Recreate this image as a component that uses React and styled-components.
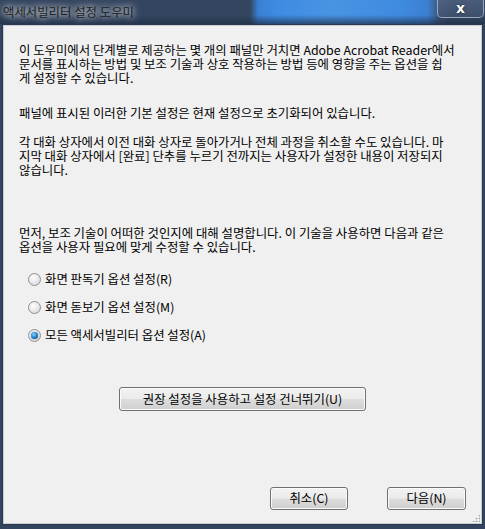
import styled, { createGlobalStyle } from "styled-components";

const GlobalStyle = createGlobalStyle`
  html, body {
    margin: 0;
    padding: 0;
    background: #33445e;
  }
  body {
    font-family: "Noto Sans CJK KR", "Noto Sans", sans-serif;
    font-size: 12.4px;
    color: #000;
  }
`;

const Window = styled.div`
  width: 485px;
  height: 529px;
  display: flex;
  flex-direction: column;
  background: #33445e;
  box-sizing: border-box;
`;

// Aero 타이틀바: 어두운 슬레이트 위에 흐릿한 파란 영역
const TitleBar = styled.div`
  height: 24px;
  flex: none;
  display: flex;
  align-items: flex-start;
  justify-content: space-between;
  background:
    linear-gradient(180deg, rgba(0, 0, 0, 0) 0, rgba(0, 0, 0, 0) 15px, rgba(30, 45, 70, 0.55) 22px, rgba(30, 45, 70, 0.7) 24px),
    linear-gradient(90deg, #33445e 0, #34465f 250px, #3a7fd0 258px, #3d8be2 275px, #4993e2 330px, #3f8be0 400px, #3c7fcf 428px, #3a5272 440px, #344660 450px);
`;

const Title = styled.span`
  margin: 4px 0 0 3px;
  font-size: 12.4px;
  line-height: 16px;
  color: #1e1e1e;
  text-shadow: 0 0 6px rgba(255, 255, 255, 0.9), 0 0 10px rgba(255, 255, 255, 0.7);
`;

const CloseButton = styled.div`
  width: 45px;
  height: 18px;
  margin-right: 1px;
  margin-top: -1px;
  display: flex;
  align-items: center;
  justify-content: center;
  border: 1px solid rgba(220, 230, 245, 0.55);
  border-top: none;
  border-radius: 0 0 5px 5px;
  background: linear-gradient(180deg, rgba(90, 110, 140, 0.6), rgba(70, 90, 120, 0.5));
  color: #fff;
  font-family: "DejaVu Sans", sans-serif;
  font-weight: bold;
  font-size: 14px;
  line-height: 16px;
  text-shadow: 0 0 2px #1a2436, 0 0 1px #1a2436;
`;

const Client = styled.div`
  flex: 1;
  margin: 0 2px 4px 2px;
  border: 1px solid #2a3950;
  box-shadow: inset 0 0 0 1px #c9ced6;
  background: #f0f0f0;
  padding: 18px 16px 14px 16px;
  display: flex;
  flex-direction: column;
  position: relative;
`;

const Paragraph = styled.p`
  margin: ${(p) => p.$gap || 0}px 0 0 0;
  line-height: 14px;
  white-space: nowrap;
`;

const RadioGroup = styled.div`
  display: flex;
  flex-direction: column;
  gap: 12px;
  margin: 17px 0 0 9px;
`;

const RadioRow = styled.label`
  display: flex;
  align-items: center;
  gap: 4px;
  height: 16px;
  line-height: 16px;
`;

const RadioDot = styled.span`
  width: 11px;
  height: 11px;
  border-radius: 50%;
  border: 1px solid #8e8f8f;
  background: radial-gradient(circle at 40% 35%, #ffffff 0%, #e6e6e6 55%, #cfcfcf 100%);
  position: relative;
  flex: none;
  &::after {
    content: "";
    display: ${(p) => (p.$checked ? "block" : "none")};
    position: absolute;
    left: 2px;
    top: 2px;
    width: 7px;
    height: 7px;
    border-radius: 50%;
    background: radial-gradient(circle at 40% 35%, #8fd0ff 0%, #2a8ad8 45%, #0b3f7a 100%);
    box-shadow: 0 0 1px #0a3060;
  }
`;

const CenterRow = styled.div`
  display: flex;
  justify-content: center;
  margin-top: 44px;
`;

const Footer = styled.div`
  margin-top: auto;
  display: flex;
  justify-content: flex-end;
  gap: 39px;
`;

const Button = styled.button`
  width: ${(p) => p.$w}px;
  height: ${(p) => p.$h || 23}px;
  padding: 0;
  font-family: "Noto Sans CJK KR", "Noto Sans", sans-serif;
  font-size: 12.4px;
  line-height: 1;
  color: #000;
  border: 1px solid #707070;
  border-radius: 3px;
  background: linear-gradient(180deg, #f2f2f2 0%, #ebebeb 48%, #dddddd 52%, #cfcfcf 100%);
  box-shadow: inset 0 0 0 1px #fbfbfb;
`;

const Grip = styled.div`
  position: absolute;
  right: 2px;
  bottom: 2px;
  width: 8px;
  height: 8px;
  background:
    radial-gradient(circle, #a8adb5 0.8px, transparent 1.2px) 0 0 / 3px 3px;
  clip-path: polygon(100% 0, 100% 100%, 0 100%);
`;

const options = [
  { label: "화면 판독기 옵션 설정(R)", checked: false },
  { label: "화면 돋보기 옵션 설정(M)", checked: false },
  { label: "모든 액세서빌리터 옵션 설정(A)", checked: true },
];

const App = () => {
  return (
    <>
      <GlobalStyle />
      <Window>
        <TitleBar>
          <Title>액세서빌리터 설정 도우미</Title>
          <CloseButton>x</CloseButton>
        </TitleBar>
        <Client>
          <Paragraph>
            이 도우미에서 단계별로 제공하는 몇 개의 패널만 거치면 Adobe Acrobat Reader에서<br />
            문서를 표시하는 방법 및 보조 기술과 상호 작용하는 방법 등에 영향을 주는 옵션을 쉽<br />
            게 설정할 수 있습니다.
          </Paragraph>
          <Paragraph $gap={21}>
            패널에 표시된 이러한 기본 설정은 현재 설정으로 초기화되어 있습니다.
          </Paragraph>
          <Paragraph $gap={15}>
            각 대화 상자에서 이전 대화 상자로 돌아가거나 전체 과정을 취소할 수도 있습니다. 마<br />
            지막 대화 상자에서 [완료] 단추를 누르기 전까지는 사용자가 설정한 내용이 저장되지<br />
            않습니다.
          </Paragraph>
          <Paragraph $gap={49}>
            먼저, 보조 기술이 어떠한 것인지에 대해 설명합니다. 이 기술을 사용하면 다음과 같은<br />
            옵션을 사용자 필요에 맞게 수정할 수 있습니다.
          </Paragraph>
          <RadioGroup>
            {options.map((o) => (
              <RadioRow key={o.label}>
                <RadioDot $checked={o.checked} />
                {o.label}
              </RadioRow>
            ))}
          </RadioGroup>
          <CenterRow>
            <Button $w={247} $h={24}>권장 설정을 사용하고 설정 건너뛰기(U)</Button>
          </CenterRow>
          <Footer>
            <Button $w={78}>취소(C)</Button>
            <Button $w={79}>다음(N)</Button>
          </Footer>
          <Grip />
        </Client>
      </Window>
    </>
  );
};

export default App;
